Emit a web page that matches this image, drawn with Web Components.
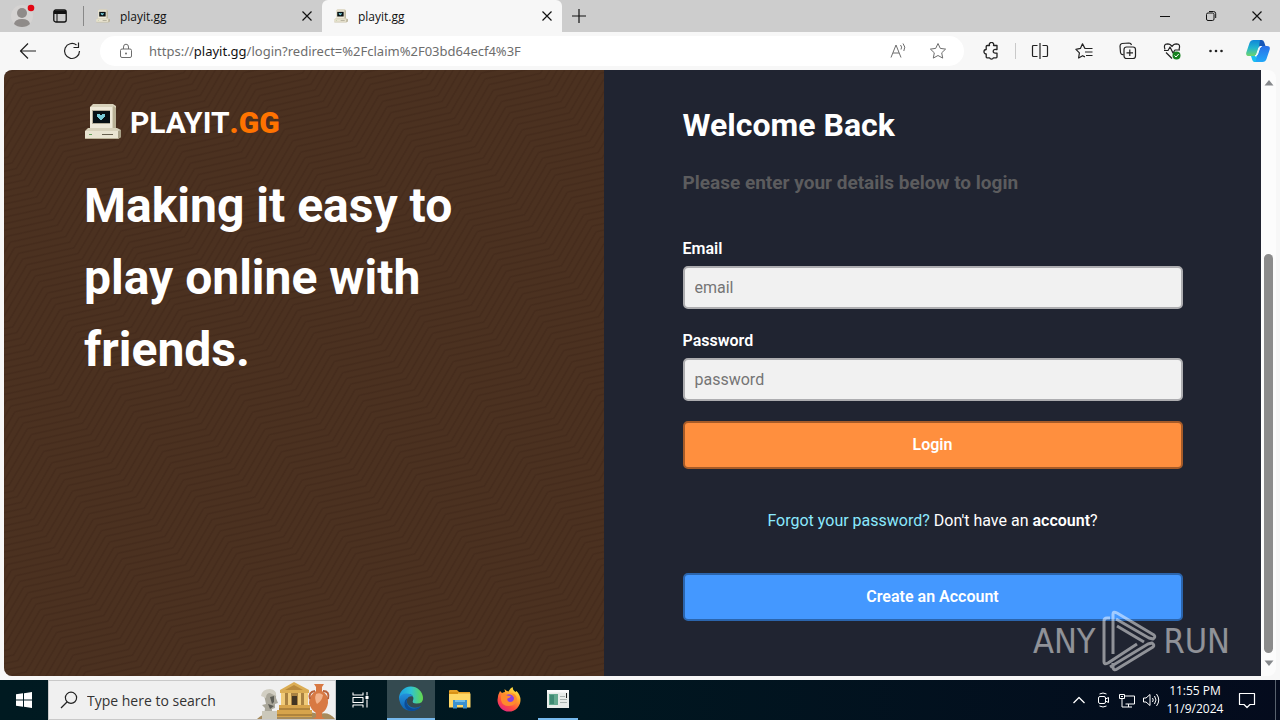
<!DOCTYPE html>
<html lang="en">

<head>
    <meta charset="UTF-8">
    <meta name="viewport" content="width=device-width, initial-scale=1.0">
    <title>playit.gg</title>
    <style>
        body {
            margin: 0;
            font: 16px Roboto, sans-serif;
        }
        desktop-screen {
            height: 100vh;
        }
    </style>
</head>

<body>
    <desktop-screen>
        <browser-tabs slot="window"></browser-tabs>
        <browser-toolbar slot="window"></browser-toolbar>
        <browser-page slot="window">
            <brand-panel>Making it easy to play online with friends.</brand-panel>
            <login-panel>
                <span slot="title">Welcome Back</span>
                <span slot="hint">Please enter your details below to login</span>
            </login-panel>
        </browser-page>
        <task-bar slot="taskbar"></task-bar>
    </desktop-screen>

    <script>
        // ==================================================================== icons
        const line = (d, w = 1) => `<path d="${d}" fill="none" stroke="currentColor" stroke-width="${w}" stroke-linejoin="round"/>`;
        const ICONS = {
            // ---------------------------------------------------------------- tab strip
            profile: [28, `<circle cx="14" cy="14" r="11" fill="#d5d3d2"/><circle cx="14" cy="11" r="5" fill="#8f8b89"/><path d="M6 22q1-5 8-5t8 5q-3 3-8 3t-8-3" fill="#8f8b89"/><circle cx="23" cy="6" r="3.3" fill="#e30613"/>`],
            workspaces: [16, `<rect x="1.8" y="2" width="12.4" height="12" rx="2" fill="none" stroke="currentColor" stroke-width="1.3"/><path d="M2 2.500h12V6H5.500v8H4.500V6H2z" fill="currentColor"/>`],
            close: [12, line('M1.500 1.500l9 9M10.500 1.500l-9 9', 1.2)],
            plus: [16, line('M8 1v14M1 8h14', 1.2)],
            minimize: [12, line('M1 6.500h10')],
            restore: [12, `<rect x="1.500" y="3" width="7.500" height="7.500" rx="1.500" fill="none" stroke="currentColor"/>` + line('M4 1.500h4.500a2.200 2.200 0 0 1 2.200 2.200V8')],
            // ---------------------------------------------------------------- toolbar
            back: [20, line('M18 10H2.500M10 2.500L2.500 10l7.500 7.500', 1.2)],
            reload: [20, line('M17.500 10A7.500 7.500 0 1 1 14.500 4M16.500 1.500V6.500H11.500', 1.2)],
            lock: [16, `<rect x="2.500" y="6" width="11" height="8.500" rx="1.500" fill="none" stroke="currentColor"/>` + line('M5.500 6V4a2.500 2.800 0 0 1 5 0V6') + `<circle cx="8" cy="10.500" r="1" fill="currentColor"/>`],
            read: [18, line('M2 15.500L7 3l5 12.500M4 11h6M11.500 3q2 2 .5 4.500M14 1.500q3.200 3.500 .8 7.500')],
            star: [18, line('M9 1.500l2.300 4.900 5.300.7-3.900 3.700 1 5.300L9 13.500l-4.700 2.600 1-5.300L1.400 7.100l5.300-.7z')],
            puzzle: [18, line('M6 3.500h1.500a2.200 2.200 0 1 1 4 0H15v4h-1.300a1.900 1.900 0 1 0 0 3.600H15V15q0 .8-.8.800H11.500a2.200 2.200 0 0 1-4 0H5q-.8 0-.8-.8v-3a2.200 2.200 0 1 1 0-4.500V4.500q0-1 1-1z', 1.3)],
            split: [18, line('M6.500 3.500H2.500q-1 0-1 1v9q0 1 1 1h4M11.500 3.500h4q1 0 1 1v9q0 1-1 1h-4M9 1v16', 1.2)],
            favorites: [18, line('M10 6.600L7.500 1.800 5.400 6.400.9 7.300l3.500 3.500-.8 5.200 4-2.300 2.300 1.200M10 6.500h7.500M10 10h7.500M11 13.500h6.500', 1.2)],
            collections: [18, line('M4.500 12.500Q2 13 1.500 10.500L1 4q0-2 2-2.500l7-.5q2 0 2.500 2', 1.2) + `<rect x="5" y="5" width="11.500" height="11.500" rx="2.500" fill="none" stroke="currentColor" stroke-width="1.200"/>` + line('M10.800 7.500v6.500M7.500 10.800H14', 1.2)],
            health: [18, line('M2 7.500Q0 2 4.500 1.800 7.500 1.800 9 4.500q1.500-2.700 4.500-2.700Q18 2 16 7.500M1 8.500h4l2-3.500 3 6 2-3h5M3 10.500l6 6', 1.2) + `<circle cx="13.500" cy="13.500" r="4" fill="#16811f"/><path d="M11.500 13.500l1.500 1.500 2.700-3" stroke="#fff" fill="none"/>`],
            more: [18, `<circle cx="3.500" cy="9" r="1.300" fill="currentColor"/><circle cx="9" cy="9" r="1.300" fill="currentColor"/><circle cx="14.500" cy="9" r="1.300" fill="currentColor"/>`],
            copilot: [24, `<defs><linearGradient id="a" x2="0" y2="1"><stop stop-color="#0f86d8"/><stop offset=".5" stop-color="#22b5cf"/><stop offset="1" stop-color="#6fd56c"/></linearGradient><linearGradient id="b" x2="0" y2="1"><stop stop-color="#2a6fe8"/><stop offset="1" stop-color="#21a8f8"/></linearGradient></defs>
                <path d="M7.500 1H16l-5.500 14.500q-.8 1.500-2.500 1.500H3Q-.5 17 .3 13.500L3.500 4q1-3 4-3z" fill="url(#a)"/><path d="M14 1h1.500q2 0 2.700 2.200L19.500 7H16q-2.500 0-3.300 2.500z" fill="#1757b8"/><path d="M16.500 7H21q3.500 0 2.700 3.500l-3.200 9.500q-1 3-4 3H8.500L13.500 9.500Q14.500 7 16.500 7z" fill="url(#b)"/><path d="M5 17h3.500q2 0 2.800-2.500L9.500 23H8.500q-1.500 0-2.200-2z" fill="#19c0ef"/><path d="M13.800 7.500h1.700q-1.500.5-2 2l-2 6q-.6 1.500-2.500 1.500 1.300-.5 1.800-2l2-6z" fill="#f2faff" stroke="#f2faff"/>`],
            // ---------------------------------------------------------------- the beige computer
            computer: [38, `<path d="M6 4l3-3h20l3 2v24l-3 2H6z" fill="#d8d2bb"/><path d="M6 4h22v24H6z" fill="#eee9d8"/><path d="M29 3l3 2v21l-3 3z" fill="#b9b196"/><rect x="8" y="7" width="18" height="14" fill="#b4ad98"/><rect x="9" y="8" width="17" height="12" fill="#071014"/><path d="M13 11h3v1h2v-1h3v3h-1v1h-1v1h-1v1h-2v-1h-1v-1h-1v-1h-1z" fill="#79cdd9"/><path d="M4 25h29l4 2v7l-3 2H1v-8z" fill="#d8d2bb"/><path d="M1 28h33v7H1z" fill="#e9e4d1"/><path d="M34 28l3-1v7l-3 2z" fill="#a8a087"/><path d="M5 31h3v1H5z" fill="#65a25c"/><path d="M18 31h11v1H18z" fill="#66604e"/><path d="M1 35h33v1H1z" fill="#b9b196"/>`],
            // ---------------------------------------------------------------- taskbar
            windows: [18, `<path d="M1 3.300l7-1V8.500H1zM9 2.200L17 1v7.500H9zM1 9.500h7v6.200l-7-1zM9 9.500h8V17l-8-1.200z" fill="currentColor"/>`],
            search: [18, `<circle cx="11" cy="6.800" r="5.600" fill="none" stroke="currentColor" stroke-width="1.200"/>` + line('M7 11l-6 6', 1.3)],
            taskview: [18, line('M2 1.500v2.500h10V1.500M2 16.500V14h10v2.500M2 6.500h10v5H2zM16 1v3.500M16 8.500v8', 1.1) + `<rect x="14.500" y="5" width="3" height="3" fill="currentColor"/>`],
            edge: [26, `<defs><linearGradient id="e" x2="1"><stop stop-color="#1b9de2"/><stop offset=".5" stop-color="#2fc3d3"/><stop offset="1" stop-color="#65d94a"/></linearGradient><linearGradient id="f" x2="0" y2="1"><stop stop-color="#2490dc"/><stop offset="1" stop-color="#0b5fae"/></linearGradient></defs>
                <path d="M1 13A12 12 0 0 1 25 12q.5 5.500-6.500 5.500-5 0-3.500-3 1.500-3.500-2-6Q8 6.500 1 13z" fill="url(#e)"/><path d="M1 13Q2 7.500 8.500 7.500q4.500 0 6.500 3-4.500-1-6 3-1 5 4 7.500 5 2 10-1Q19 25 13 25 3 24.500 1 13z" fill="url(#f)"/><path d="M9.500 12q-2.500 6 2.500 9.500 5 3 11-1.500-3 5-10 5-5.500-1-6.500-6-.5-5 3-7z" fill="#0d4b94"/>`],
            folder: [24, `<path d="M1 4q0-1 1-1h7l2 2h11v5H1z" fill="#e7a128"/><path d="M1 6.500h21.500V20.500H1z" fill="#ffd766"/><path d="M1 5h9V7H1z" fill="#d99116"/><path d="M5 13h14v8.500h-4V18H9v3.500H5z" fill="#3b91cf"/><path d="M7 13h10v2H7z" fill="#71bde8"/>`],
            firefox: [26, `<defs><linearGradient id="g" x1=".8" y1="0" x2=".2" y2="1"><stop stop-color="#fff24a"/><stop offset=".35" stop-color="#ffa42a"/><stop offset=".7" stop-color="#ff4b40"/><stop offset="1" stop-color="#e0208c"/></linearGradient></defs>
                <path d="M4 5l2 2q2-1 3-1l-.5-3q2 2 4 2.500Q14 2 16.500 1q0 3 3 5l1-1q4 4 4 9a11.500 11.500 0 0 1-23 0Q1.500 9 4 5z" fill="url(#g)"/><circle cx="13" cy="14" r="5.800" fill="#8b3fe0"/><path d="M5 9q3-2 6 .5l4 .5q-1 2-3.500 2.500-1 3 2.500 3.500 4 0 4-4-1-4-4-5 6 0 7 6-1 7-8 7t-8-6z" fill="#ff8a2d"/>`],
            program: [24, `<rect x="1" y="3" width="22" height="18" fill="#e8ece9"/><path d="M1 3h22v2.500H1z" fill="#fafafa"/><path d="M3 7h9v11H3z" fill="#63a88e"/><path d="M4 8h4v9H4z" fill="#3f8a73"/><path d="M14 9h5v1h-5zM14 12h7v1h-7zM14 15h7v1h-7z" fill="#aab3b0"/><path d="M20 6h1v5h-1z" fill="#222"/>`],
            chevron: [16, line('M2.500 11L8 5.500l5.500 5.500', 1.3)],
            camera: [16, `<rect x="3.500" y="4.500" width="7" height="7" rx="1.500" fill="none" stroke="currentColor"/>` + line('M10.500 7l3-1.500v5l-3-1.500M4.500 2q3.500-2 7 0M4.500 14q3.500 2 7 0')],
            network: [16, line('M5.500 4H15.500v8h-9M9.500 12v3M6 15h7M.5 2.500h5v4h-5zM3 6.500v8.500h3M2 4.500h2')],
            volume: [18, line('M1.500 7H4l4-3.500v11L4 11H1.500zM10.500 7q1.500 2 0 4M12.500 5q3 4 0 8M14.500 3q4.500 6 0 12')],
            notice: [18, line('M1.500 2.500h15v11H12l-3 3-3-3H1.500z', 1.2)],
            up: [10, `<path d="M5 2l4.500 5.500h-9z" fill="#85888b"/>`],
            down: [10, `<path d="M5 8L.5 2.500h9z" fill="#85888b"/>`]
        };

        // ==================================================================== helper
        function define(name, html, setup) {
            const template = document.createElement('template');
            template.innerHTML = html;
            customElements.define(name, class extends HTMLElement {
                constructor() {
                    super().attachShadow({ mode: 'open' }).append(template.content.cloneNode(true));
                }
                connectedCallback() {
                    setup && setup(this, this.shadowRoot);
                }
            });
        }

        const RESET = `button{font:inherit;color:inherit;border:0;padding:0;background:none;display:grid;place-items:center;flex:none}`;

        // ==================================================================== <ui-icon name size>
        define('ui-icon', `
            <style>:host{display:block;flex:none}svg{display:block}</style>`,
            (el, root) => {
                const [box, content] = ICONS[el.getAttribute('name')];
                const size = el.getAttribute('size') || box;
                root.querySelector('svg')?.remove();
                root.append(document.createRange().createContextualFragment(
                    `<svg width="${size}" height="${size}" viewBox="0 0 ${box} ${box}" aria-hidden="true">${content}</svg>`));
            });

        // ==================================================================== <desktop-screen>
        define('desktop-screen', `
            <style>
                :host{display:flex;flex-direction:column;background:#f7f7f7}
                main{flex:1;min-height:0;display:flex;flex-direction:column}
            </style>
            <main><slot name="window"></slot></main>
            <slot name="taskbar"></slot>`);

        // ==================================================================== <browser-tab>
        define('browser-tab', `
            <style>
                ${RESET}
                :host{display:flex;align-items:center;gap:10px;flex:0 1 238px;padding:0 8px 0 12px;box-sizing:border-box;border-radius:0 0 6px 0}
                :host([active]){background:#f7f7f7;border-radius:6px 6px 0 0;flex-basis:240px}
                span{flex:1}
                button{width:14px;height:20px}
            </style>
            <ui-icon name="computer" size="14"></ui-icon>
            <span><slot></slot></span>
            <button aria-label="Close tab"><ui-icon name="close"></ui-icon></button>`);

        // ==================================================================== <browser-tabs>
        define('browser-tabs', `
            <style>
                ${RESET}
                :host{display:flex;flex:none;height:32px;background:#cdcdcd;color:#111;font:12px "Open Sans","Noto Sans",sans-serif}
                .profile{width:44px}
                .spaces{width:32px}
                i{width:1px;height:20px;margin:6px 0 0 7px;background:#888}
                .new{width:34px}
                .controls{display:flex;margin-left:auto}
                .controls button{width:46px}
            </style>
            <button class="profile" aria-label="Profile"><ui-icon name="profile"></ui-icon></button>
            <button class="spaces" aria-label="Workspaces"><ui-icon name="workspaces"></ui-icon></button>
            <i></i>
            <browser-tab>playit.gg</browser-tab>
            <browser-tab active>playit.gg</browser-tab>
            <button class="new" aria-label="New tab"><ui-icon name="plus"></ui-icon></button>
            <div class="controls">
                <button aria-label="Minimize"><ui-icon name="minimize"></ui-icon></button>
                <button aria-label="Restore"><ui-icon name="restore"></ui-icon></button>
                <button aria-label="Close"><ui-icon name="close"></ui-icon></button>
            </div>`);

        // ==================================================================== <browser-toolbar>
        define('browser-toolbar', `
            <style>
                ${RESET}
                :host{display:flex;align-items:center;flex:none;height:38px;padding:0 2px 0 6px;color:#222}
                button{width:44px;height:32px}
                .address{flex:1;display:flex;align-items:center;height:30px;margin:0 5px 0 6px;padding:0 6px 0 18px;border-radius:15px;background:#fff;color:#6d6d6d;font:13px "Noto Sans","Open Sans",sans-serif}
                .url{flex:1;margin-left:15px}
                b{font-weight:400;color:#111}
                .address button{width:40px}
                i{width:1px;height:16px;margin:0 2px;background:#c9c9c9}
                .copilot{width:40px}
            </style>
            <button aria-label="Back"><ui-icon name="back"></ui-icon></button>
            <button aria-label="Refresh"><ui-icon name="reload"></ui-icon></button>
            <div class="address">
                <ui-icon name="lock"></ui-icon>
                <span class="url">https://<b>playit.gg</b>/login?redirect=%2Fclaim%2F03bd64ecf4%3F</span>
                <button aria-label="Read aloud"><ui-icon name="read"></ui-icon></button>
                <button aria-label="Add to favorites"><ui-icon name="star"></ui-icon></button>
            </div>
            <button aria-label="Extensions"><ui-icon name="puzzle"></ui-icon></button>
            <i></i>
            <button aria-label="Split screen"><ui-icon name="split"></ui-icon></button>
            <button aria-label="Favorites"><ui-icon name="favorites"></ui-icon></button>
            <button aria-label="Collections"><ui-icon name="collections"></ui-icon></button>
            <button aria-label="Browser essentials"><ui-icon name="health"></ui-icon></button>
            <button aria-label="More"><ui-icon name="more"></ui-icon></button>
            <button class="copilot" aria-label="Copilot"><ui-icon name="copilot"></ui-icon></button>`);

        // ==================================================================== <browser-page>
        define('browser-page', `
            <style>
                :host{display:flex;flex:1;min-height:0;margin:0 4px 4px;border-radius:8px;overflow:hidden;position:relative}
                .page{flex:1;display:grid;grid-template-columns:minmax(320px,600px) minmax(400px,1fr);overflow:hidden}
                .scroll{flex:none;width:15px;background:#fcfcfc;display:flex;flex-direction:column;align-items:center;padding:8px 0;box-sizing:border-box}
                .track{flex:1;width:9px;margin:6px 0 5px;display:flex;flex-direction:column}
                .track::before{content:"";flex:160}
                .thumb{flex:400;border-radius:5px;background:#8b8b8b}
                water-mark{position:absolute;right:46px;bottom:4px}
            </style>
            <div class="page"><slot></slot></div>
            <div class="scroll">
                <ui-icon name="up"></ui-icon>
                <div class="track"><div class="thumb"></div></div>
                <ui-icon name="down"></ui-icon>
            </div>
            <water-mark></water-mark>`);

        // ==================================================================== <water-mark>
        define('water-mark', `
            <style>
                :host{display:flex;align-items:center;gap:6px;color:#fff;opacity:.5;font:34px "DejaVu Sans Condensed",sans-serif;line-height:62px;pointer-events:none}
                svg{display:block}
            </style>
            <span>ANY</span>
            <svg width="56" height="62" viewBox="0 0 56 62" fill="none" stroke="currentColor" stroke-width="3" stroke-linejoin="round">
                <path d="M12 44V4q0-3 4-1L53 25q2 2-1 4l-4-1L15 9"/>
                <path d="M9 8H6q-3 0-3 3v41q0 3 4 1L36 34M16 16l27 16M12 53v5q1 3 4 1L52 37q2-2-1-4l-4 1L9 57"/>
            </svg>
            <span>RUN</span>`);

        // ==================================================================== <brand-panel>
        define('brand-panel', `
            <style>
                :host{display:grid;background:#4b3120;color:#fff;overflow:hidden}
                .texture,.text{grid-area:1/1}
                .texture{width:100%;height:100%}
                .text{padding:32px 80px}
                .logo{display:flex;align-items:center;gap:8px;height:40px;font-size:30px;font-weight:700}
                .logo b{color:#ff7300}
                h1{margin:28px 0 0;font-size:48px;line-height:72px;font-weight:700}
            </style>
            <svg class="texture" aria-hidden="true">
                <defs>
                    <pattern id="waves" width="96" height="7" patternUnits="userSpaceOnUse" patternTransform="rotate(-36)">
                        <g fill="none" stroke="#3b2417" stroke-width="1.500" opacity=".45">
                            <path d="M0-18L48 3 96-18M0-11L48 10 96-11M0-4L48 17 96-4M0 3L48 24 96 3"/>
                        </g>
                    </pattern>
                </defs>
                <rect width="100%" height="100%" fill="url(#waves)"/>
            </svg>
            <div class="text">
                <div class="logo"><ui-icon name="computer"></ui-icon><span>PLAYIT<b>.GG</b></span></div>
                <h1><slot></slot></h1>
            </div>`);

        // ==================================================================== <login-panel>
        define('login-panel', `
            <style>
                :host{background:#202431;color:#fff;line-height:24px}
                form{max-width:500px;margin:0 auto;padding:31px 24px 0;display:flex;flex-direction:column}
                h2{margin:0 0 20px;font-size:32px;line-height:48px;font-weight:700}
                h3{margin:0 0 40px;font-size:19px;line-height:28px;font-weight:700;color:#5c5c5e}
                label{font-weight:600;margin-bottom:5px}
                input{box-sizing:border-box;height:43px;margin:0 0 20px;padding:0 10px;border:2px solid #adadb0;border-radius:5px;background:#f1f1f1;font:inherit;color:#222}
                input::placeholder{color:#757575}
                button{height:48px;padding:0;border:2px solid #a65b28;border-radius:5px;background:#ff8f3e;color:#fff;font:inherit;font-weight:600}
                .create{border-color:#2b65ad;background:#4498ff}
                p{margin:40px 0;text-align:center}
                a{color:#8be9fd;text-decoration:none}
                b{font-weight:600}
            </style>
            <form>
                <h2><slot name="title"></slot></h2>
                <h3><slot name="hint"></slot></h3>
                <label for="email">Email</label>
                <input id="email" type="email" placeholder="email">
                <label for="password">Password</label>
                <input id="password" type="password" placeholder="password">
                <button type="submit">Login</button>
                <p><a href="#reset">Forgot your password?</a> Don't have an <b>account</b>?</p>
                <button type="button" class="create">Create an Account</button>
            </form>`,
            (el, root) => root.querySelector('form').addEventListener('submit', (evt) => evt.preventDefault()));

        // ==================================================================== <task-bar>
        define('task-bar', `
            <style>
                ${RESET}
                :host{display:flex;flex:none;height:40px;background:linear-gradient(90deg,#001a21,#001720 45%,#040b1d);color:#fff;font:12px "Open Sans","Noto Sans",sans-serif}
                button{width:48px}
                .search{display:flex;align-items:center;flex:0 1 288px;min-width:0;box-sizing:border-box;padding-left:11px;border:1px solid #c9c9c9;background:#f0f0f0;color:#222}
                input{flex:1;min-width:0;margin:0 0 0 9px;padding:0;border:0;background:none;outline:0;font:14px "Open Sans","Noto Sans",sans-serif}
                input::placeholder{color:#333}
                .search svg{flex:none;align-self:flex-end}
                .apps{display:flex;gap:1px;margin-left:3px}
                .apps button{box-sizing:border-box;border-bottom:2px solid transparent}
                .apps .on{background:#344a50;border-color:#76b9ed}
                .apps .run{width:40px;margin:0 4px;border-color:#76b9ed}
                .tray{display:flex;margin-left:auto;padding-right:4px}
                .tray button{width:24px}
                .tray .clock{width:64px;line-height:18px;align-content:center}
                .tray .notice{width:40px;margin-right:8px}
                i{width:1px;background:#58616d}
            </style>
            <button aria-label="Start"><ui-icon name="windows"></ui-icon></button>
            <div class="search">
                <ui-icon name="search"></ui-icon>
                <input aria-label="Search" placeholder="Type here to search">
                <svg width="78" height="38" viewBox="0 0 78 38" aria-hidden="true">
                    <path d="M0 38Q8 30 20 33l20-5 22 5q10-3 16 5z" fill="#a78b5c"/>
                    <path d="M7 37l1-10-3-3 4-1-2-9q1-5 7-5 6 1 5 8l2 5-3 1v4l-3 1v9z" fill="#aaa79a"/><path d="M4 15q1-7 9-7 7 1 6 7l-6-3q-4 0-4 5z" fill="#d2cfc3"/><path d="M13 16l4-1v6l-2 2zM11 23l6 2-4 3z" fill="#5c5c55"/><path d="M5 30h15v8H5z" fill="#cbc8ba"/>
                    <path d="M23 9L37 1l15 8v3H23z" fill="#dbad54"/><path d="M28 9l9-5 9 5z" fill="#b98a3c"/><path d="M24 12h27v13H24z" fill="#a98242"/><path d="M24 12h4v13h-4zM31 12h3v13h-3zM41 12h3v13h-3zM47 12h4v13h-4z" fill="#f0cb79"/><path d="M35 15h5v9h-5z" fill="#423523"/><path d="M22 24h31v5H22zM20 29h35v7H20z" fill="#d7a44c"/><path d="M22 27h31v2H22zM20 33h35v2H20z" fill="#b0843c"/>
                    <path d="M57 3h10l-2 3v4q7 4 6 12-1 7-6 10v4l3 2H56l3-2v-4q-5-3-7-10 0-8 7-12V6z" fill="#d87943"/><path d="M58 10q-7 1-5 8M66 10q7 0 5 8" fill="none" stroke="#b9623a" stroke-width="2"/><path d="M59 13q4-2 7 1-1 6-6 9-3-5-1-10z" fill="#f2b28b"/>
                </svg>
            </div>
            <button aria-label="Task View"><ui-icon name="taskview"></ui-icon></button>
            <div class="apps">
                <button class="on" aria-label="Microsoft Edge"><ui-icon name="edge"></ui-icon></button>
                <button aria-label="File Explorer"><ui-icon name="folder"></ui-icon></button>
                <button aria-label="Firefox"><ui-icon name="firefox"></ui-icon></button>
                <button class="run" aria-label="Program"><ui-icon name="program"></ui-icon></button>
            </div>
            <div class="tray">
                <button aria-label="Show hidden icons"><ui-icon name="chevron"></ui-icon></button>
                <button aria-label="Camera"><ui-icon name="camera"></ui-icon></button>
                <button aria-label="Network"><ui-icon name="network"></ui-icon></button>
                <button aria-label="Volume"><ui-icon name="volume"></ui-icon></button>
                <button class="clock"><span>11:55 PM</span><span>11/9/2024</span></button>
                <button class="notice" aria-label="Notifications"><ui-icon name="notice"></ui-icon></button>
                <i></i>
            </div>`);
    </script>
</body>

</html>
